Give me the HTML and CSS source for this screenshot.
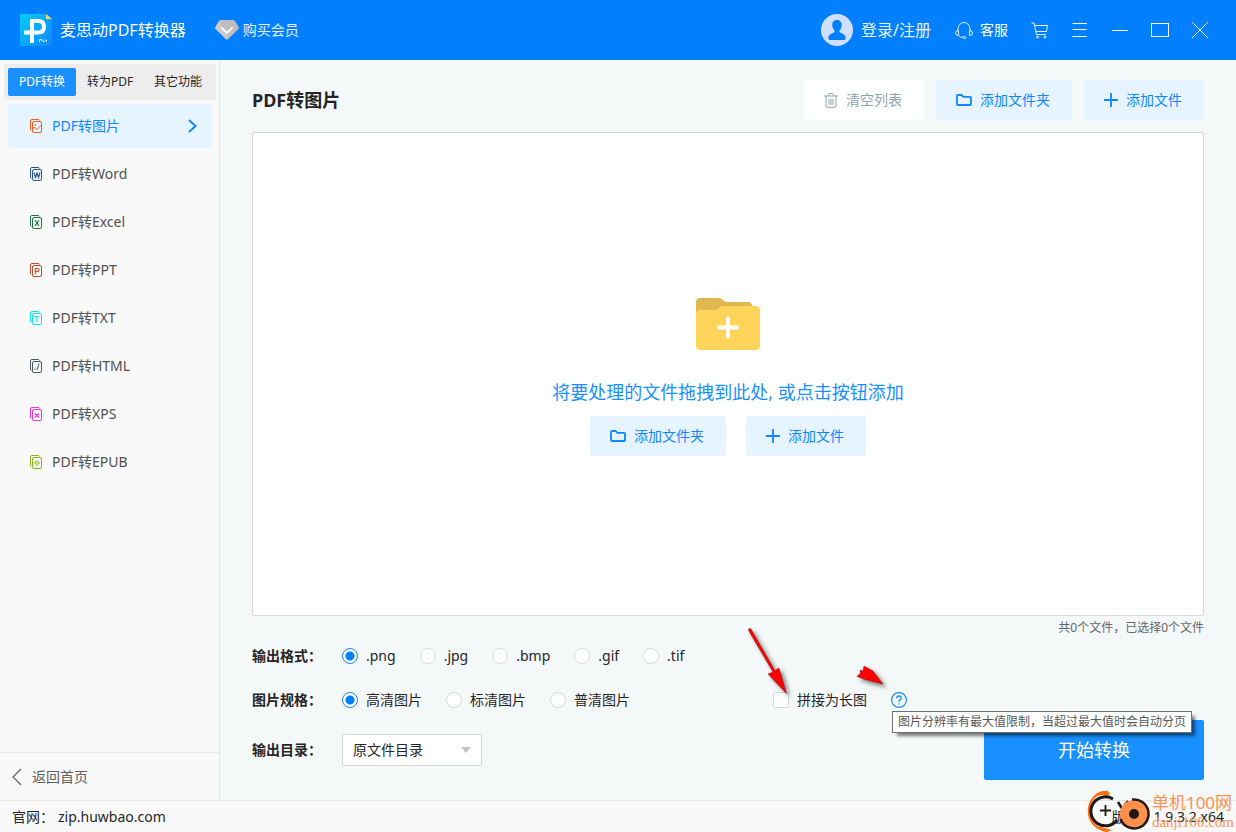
FILE: index.html
```html
<!DOCTYPE html>
<html lang="zh-CN">
<head>
<meta charset="utf-8">
<title>麦思动PDF转换器</title>
<link rel="stylesheet" href="styles.css">
</head>
<body>
<svg class="defs" aria-hidden="true">
  <symbol id="pages" viewBox="0 0 12 14"><path d="M1.5 11.5Q.5 11 .5 10V2Q.5.5 2 .5H8Q9.200 .5 9.500 1.500" fill="none" stroke="currentColor"/><rect x="2.500" y="2.500" width="9" height="11" rx="1.500" fill="none" stroke="currentColor"/></symbol>
  <symbol id="folder" viewBox="0 0 16 12"><path d="M1 2Q1 1 2 1H5.500L7.500 2.800H14Q15 2.800 15 3.800V10Q15 11 14 11H2Q1 11 1 10Z" fill="none" stroke="currentColor" stroke-width="1.800"/></symbol>
  <symbol id="plus" viewBox="0 0 14 14"><path d="M7 0V14M0 7H14" fill="none" stroke="currentColor" stroke-width="1.800"/></symbol>
</svg>
<header class="header">
  <svg class="logo" viewBox="0 0 32 32" aria-hidden="true">
    <defs><linearGradient id="lg" x1="0" y1="0" x2="1" y2="1"><stop offset="0" stop-color="#00cdfb"/><stop offset="1" stop-color="#1285fb"/></linearGradient></defs>
    <path d="M0 0H26L32 5V32H0Z" fill="url(#lg)"/><path d="M26 0L32 5H26Z" fill="#ffd45c"/>
    <path d="M12 29V7H18.500Q24 7 24 12.800T18.500 18.600H4" fill="none" stroke="#fff" stroke-width="4"/>
    <path d="M19.500 28V25.500H21.500V27M23 25.500V27.500H24.500M25.500 26.500H27M26.200 25.500V28" fill="none" stroke="#fff" stroke-width=".8"/>
  </svg>
  <h1 class="app-name">麦思动PDF转换器</h1>
  <button class="vip" type="button">
    <svg width="24" height="20" viewBox="0 0 24 20" aria-hidden="true"><path d="M6 0H18Q19 0 20 1L23.500 6.500Q24.300 8 23.500 9L13 19.300Q12 20 11 19.300L.5 9Q-.3 8 .5 6.500L4 1Q5 0 6 0Z" fill="#bdbdbd"/><path d="M5 0L0 8 12 20V13L6 7Z" fill="#cbcbcb"/><path d="M7 8L12 13 17 8" fill="none" stroke="#fff" stroke-width="1.800" stroke-linecap="round"/></svg>
    购买会员</button>
  <button class="login" type="button">
    <svg width="32" height="32" viewBox="0 0 32 32" aria-hidden="true"><circle cx="16" cy="16" r="16" fill="#d0dfff"/><path d="M16 6C12.500 6 11 8.500 11.300 11.500C11.500 14 12.500 15.500 13.500 16.500V18C12 19.500 7.500 20 7.300 24Q7.300 26 9 26H23Q24.700 26 24.700 24C24.500 20 20 19.500 18.500 18V16.500C19.500 15.500 20.500 14 20.700 11.500C21 8.500 19.500 6 16 6Z" fill="#007fff"/></svg>
    登录/注册</button>
  <button class="service" type="button">
    <svg width="18" height="17" viewBox="0 0 18 17" fill="none" stroke="#e6f2ff" aria-hidden="true"><path d="M3 9V7A6 6.500 0 0 1 15 7V9M3.500 8.500Q.5 8.500 .5 11T3.500 13.500ZM14.500 8.500Q17.500 8.500 17.500 11T14.500 13.500ZM3.500 13.500Q5 15.500 8 15.500"/><ellipse cx="9.500" cy="15.500" rx="1.500" ry="1"/></svg>
    客服</button>
  <nav class="window-tools">
    <button type="button" aria-label="购物车"><svg width="18" height="17" viewBox="0 0 18 17" fill="none" stroke="#e6f2ff"><path d="M.5 1H3L5.500 12.500H15M3.500 3.500H16.500L15.500 9.500H5"/><circle cx="6.500" cy="15" r="1"/><circle cx="14" cy="15" r="1"/></svg></button>
    <button type="button" aria-label="菜单"><svg width="16" height="14" viewBox="0 0 16 14" fill="none" stroke="#fff"><path d="M.5 .5H15M.5 6.500H15M.5 13.500H15"/></svg></button>
    <button type="button" aria-label="最小化"><svg width="16" height="15" viewBox="0 0 16 15" stroke="#fff"><path d="M0 7.500H16"/></svg></button>
    <button type="button" aria-label="最大化"><svg width="18" height="14" viewBox="0 0 18 14" fill="none" stroke="#fff"><rect x=".5" y=".5" width="17" height="13"/></svg></button>
    <button type="button" aria-label="关闭"><svg width="18" height="18" viewBox="0 0 18 18" stroke="#fff"><path d="M1 1L17 17M17 1L1 17"/></svg></button>
  </nav>
</header>
<div class="body">
  <aside class="sidebar">
    <div class="tabs">
      <button class="tab tab-active" type="button">PDF转换</button>
      <button class="tab" type="button">转为PDF</button>
      <button class="tab" type="button">其它功能</button>
    </div>
    <nav class="menu">
      <a class="item item-active" href="#"><svg class="file-icon image" viewBox="0 0 12 14"><use href="#pages"/><path d="M2.500 9.500L5 8.500 7 10.500 11.500 6" fill="none" stroke="currentColor"/><circle cx="5.500" cy="6" r=".8" fill="currentColor"/></svg>PDF转图片<svg class="chevron" viewBox="0 0 9 14"><path d="M1 1L7.500 7 1 13" fill="none" stroke="currentColor" stroke-width="2"/></svg></a>
      <a class="item" href="#"><svg class="file-icon word" viewBox="0 0 12 14"><use href="#pages"/><path d="M4 5.500L5.500 10.500 7 6 8.500 10.500 10 5.500" fill="none" stroke="currentColor" stroke-width="1.200"/></svg>PDF转Word</a>
      <a class="item" href="#"><svg class="file-icon excel" viewBox="0 0 12 14"><use href="#pages"/><path d="M5 5L9 11M9 5L5 11" fill="none" stroke="currentColor" stroke-width="1.200"/></svg>PDF转Excel</a>
      <a class="item" href="#"><svg class="file-icon ppt" viewBox="0 0 12 14"><use href="#pages"/><path d="M5.500 11V5.500H7.500Q9 5.500 9 7T7.500 8.500H5.500" fill="none" stroke="currentColor" stroke-width="1.200"/></svg>PDF转PPT</a>
      <a class="item" href="#"><svg class="file-icon txt" viewBox="0 0 12 14"><use href="#pages"/><path d="M4.500 5.500H9.500M7 5.500V11" fill="none" stroke="currentColor" stroke-width="1.200"/></svg>PDF转TXT</a>
      <a class="item" href="#"><svg class="file-icon html" viewBox="0 0 12 14"><use href="#pages"/><path d="M5 9.500V11M9 4.500L7 11" fill="none" stroke="currentColor"/></svg>PDF转HTML</a>
      <a class="item" href="#"><svg class="file-icon xps" viewBox="0 0 12 14"><use href="#pages"/><path d="M5 6.500L9 10.500M9 6.500L5 10.500" fill="none" stroke="currentColor" stroke-width="1.200"/></svg>PDF转XPS</a>
      <a class="item" href="#"><svg class="file-icon epub" viewBox="0 0 12 14"><use href="#pages"/><path d="M7 5.500L9.500 8 7 10.500 4.500 8ZM5.500 8H8.500" fill="none" stroke="currentColor"/></svg>PDF转EPUB</a>
    </nav>
    <a class="back" href="#"><svg width="10" height="18" viewBox="0 0 10 18" fill="none" stroke="currentColor" stroke-width="1.200"><path d="M9 1L1 9 9 17"/></svg>返回首页</a>
  </aside>
  <main class="main">
    <div class="toolbar">
      <h2 class="title">PDF转图片</h2>
      <button class="btn btn-clear" type="button"><svg width="14" height="15" viewBox="0 0 14 15" fill="none" stroke="currentColor"><path d="M0 3H14M4.500 3V1.500Q4.500 .5 5.500 .5H8.500Q9.500 .5 9.500 1.500V3M2 3V13Q2 14.300 3.200 14.300H10.800Q12 14.300 12 13V3M5 5.500V12M7 5.500V12M9 5.500V12"/></svg>清空列表</button>
      <button class="btn" type="button"><svg width="16" height="12"><use href="#folder"/></svg>添加文件夹</button>
      <button class="btn" type="button"><svg width="14" height="14"><use href="#plus"/></svg>添加文件</button>
    </div>
    <section class="drop">
      <svg class="big-folder" viewBox="0 0 64 52" aria-hidden="true"><path d="M0 20V4Q0 0 4 0H22Q25 0 27 2L29.500 4H52Q56 4 56 8V20Z" fill="#dfb84f"/><path d="M0 16Q0 12 4 12H18Q21 12 23 10L24 9Q25.500 8 28 8H60Q64 8 64 12V48Q64 52 60 52H4Q0 52 0 48Z" fill="#ffd45b"/><path d="M32 20.500V38.500M23 29.500H41" stroke="#fff" stroke-width="4" stroke-linecap="round"/></svg>
      <p class="hint">将要处理的文件拖拽到此处, 或点击按钮添加</p>
      <div class="drop-actions">
        <button class="btn" type="button"><svg width="16" height="12"><use href="#folder"/></svg>添加文件夹</button>
        <button class="btn" type="button"><svg width="14" height="14"><use href="#plus"/></svg>添加文件</button>
      </div>
    </section>
    <p class="count">共0个文件，已选择0个文件</p>
    <div class="row" role="radiogroup" aria-labelledby="fmt">
      <span class="row-label" id="fmt">输出格式：</span>
      <label class="choice"><input type="radio" name="fmt" checked>.png</label>
      <label class="choice"><input type="radio" name="fmt">.jpg</label>
      <label class="choice"><input type="radio" name="fmt">.bmp</label>
      <label class="choice"><input type="radio" name="fmt">.gif</label>
      <label class="choice"><input type="radio" name="fmt">.tif</label>
    </div>
    <div class="row row-spec" role="radiogroup" aria-labelledby="spec">
      <span class="row-label" id="spec">图片规格：</span>
      <label class="choice"><input type="radio" name="spec" checked>高清图片</label>
      <label class="choice"><input type="radio" name="spec">标清图片</label>
      <label class="choice"><input type="radio" name="spec">普清图片</label>
      <div class="merge">
        <label class="choice"><input type="checkbox">拼接为长图</label>
        <span class="help"><svg width="16" height="16" viewBox="0 0 16 16" fill="none" stroke="#1890ff"><circle cx="8" cy="8" r="7.400" stroke-width="1.200"/><path d="M5.800 6.200Q5.800 4 8 4T10.200 6Q10.200 7 9 7.800T8 10M8 11.200V12.600" stroke-width="1.300"/></svg>
          <span class="tooltip" role="tooltip">图片分辨率有最大值限制，当超过最大值时会自动分页</span></span>
        <svg class="arrows" viewBox="0 0 150 80" aria-hidden="true"><g fill="#f00" stroke="#8c1010" stroke-width=".5"><path d="M8.300 10Q9 7.500 11 9L35 50.500 39 48 46.500 73.500 28 54 33 52Z"/><path d="M117 56.500L120.500 53 120 50 123 51 124 46 133 51 143 64 127 60Z"/></g></svg>
      </div>
    </div>
    <div class="submit-row">
      <label class="row-label" for="dir">输出目录：</label>
      <span class="select-wrap"><select id="dir" class="select"><option>原文件目录</option></select></span>
      <button class="start" type="button">开始转换</button>
    </div>
  </main>
</div>
<footer class="footer">
  <span>官网：</span><a class="site" href="#">zip.huwbao.com</a>
  <span class="version"><span class="ver-label">版本：</span>1.9.3.2.x64</span>
  <div class="watermark">
    <svg width="64" height="42" viewBox="0 0 64 42" fill="none" aria-hidden="true"><path d="M21 2C10 1 2 10 2 21S9 39 21 41" stroke="#ff6f0f" stroke-width="2.500"/><path d="M9 6Q17 -1 23 3L21 6Q15 4 9 6ZM9 36Q18 38 25 40Q20 43 14 40Z" fill="#ff6f0f"/><path d="M26 9A14.500 14.500 0 1 0 30 30" stroke="#231815" stroke-width="3"/><path d="M18.500 15V26M13 20.500H24" stroke="#231815" stroke-width="1.800"/><path d="M31 12L36 20M41 11L37 16" stroke="#231815" stroke-width="2.500"/><circle cx="47" cy="24" r="14" fill="#ff914d"/><path d="M45 9.600A14.500 14.500 0 1 1 33.500 29" stroke="#231815" stroke-width="2.500"/><circle cx="47" cy="24" r="5" fill="#231815"/></svg>
    <div class="mark-text"><span class="mark-name">单机100网</span><span class="mark-url">danji100.com</span></div>
  </div>
</footer>
</body>
</html>
```
FILE: styles.css
```css
* { box-sizing: border-box; }
body {
  margin: 0;
  min-height: 100vh;
  display: flex;
  flex-direction: column;
  font: 14px/20px "Noto Sans", "Noto Sans CJK SC", sans-serif;
  color: #262626;
  background: #f4f8f9;
}
button { font: inherit; color: inherit; border: 0; padding: 0; background: none; white-space: nowrap; }
a { color: inherit; text-decoration: none; }
h1, h2, p { margin: 0; }
svg { flex: none; }
.defs { position: absolute; width: 0; height: 0; }

.header { height: 60px; display: flex; align-items: center; padding: 0 16px 0 20px; background: #007fff; color: #fff; }
.logo { width: 32px; height: 32px; margin-right: 8px; }
.app-name { font-size: 16px; font-weight: 400; line-height: 24px; }
.vip { display: flex; align-items: center; gap: 4px; margin-left: 29px; color: #e6f2ff; }
.login { display: flex; align-items: center; gap: 8px; margin-left: auto; font-size: 16px; color: #e6f2ff; }
.service { display: flex; align-items: center; gap: 7px; margin: 0 12px 0 24px; }
.window-tools { display: flex; }
.window-tools button { width: 40px; height: 40px; display: flex; align-items: center; justify-content: center; }

.body { flex: 1; display: flex; }
.sidebar { width: 220px; flex: none; display: flex; flex-direction: column; background: #f9f9f9; border-right: 1px solid #e4e6e8; }
.tabs { display: flex; margin: 4px 3px 4px 4px; padding: 4px; background: #ededed; border-radius: 2px; }
.tab { flex: 1; height: 28px; font-size: 12px; border-radius: 2px; }
.tab-active { background: #1890ff; color: #fff; }
.menu { display: flex; flex-direction: column; gap: 4px; padding: 0 7px 0 8px; }
.item { height: 44px; display: flex; align-items: center; padding: 0 15px 0 22px; border-radius: 3px; line-height: 22px; color: #505050; }
.item-active { background: #e6f4ff; color: #1684fc; }
.file-icon { width: 12px; height: 14px; margin-right: 10px; }
.chevron { width: 9px; height: 14px; margin-left: auto; }
.image { color: #ff5722; }
.word { color: #2b579a; }
.excel { color: #217346; }
.ppt { color: #d24726; }
.txt { color: #13e3f9; }
.html { color: #455a64; }
.xps { color: #f52fd0; }
.epub { color: #85b716; }
.back { height: 48px; display: flex; align-items: center; gap: 10px; margin-top: auto; padding-left: 12px; border-top: 1px solid #e4e6e8; color: #606060; }

.main { flex: 1; display: flex; flex-direction: column; padding: 20px 32px; }
.toolbar { display: flex; align-items: center; gap: 12px; margin-bottom: 12px; }
.title { margin-right: auto; font-size: 18px; font-weight: 700; line-height: 24px; }
.btn { height: 40px; display: flex; align-items: center; gap: 8px; padding: 0 22px 0 20px; border-radius: 2px; background: #e6f4ff; color: #0f86ff; }
.btn-clear { background: #fff; color: #90a4ae; }
.drop { flex: 1; display: flex; flex-direction: column; align-items: center; justify-content: center; background: #fff; border: 1px solid #d9d9d9; border-radius: 2px; }
.big-folder { width: 64px; height: 52px; margin: 5px 0 30px; }
.hint { font-size: 18px; line-height: 24px; margin-bottom: 12px; color: #1890ff; }
.drop-actions { display: flex; gap: 20px; }
.count { height: 24px; line-height: 24px; font-size: 12px; text-align: right; color: #666; }

.row { height: 32px; display: flex; align-items: center; gap: 24px; }
.row-spec { margin: 12px 0 4px; }
.row-label { width: 90px; flex: none; font-weight: 700; }
.row > .row-label { margin-right: -24px; }
.choice { display: flex; align-items: center; gap: 8px; white-space: nowrap; }
.choice input { appearance: none; width: 16px; height: 16px; margin: 0; border: 1px solid #d9d9d9; background: #fff; border-radius: 2px; }
.choice input[type="radio"] { border-radius: 50%; }
.choice input[type="radio"]:checked { border-color: #1684ff; background: radial-gradient(circle, #007fff 4px, #fff 5px); }
.merge { position: relative; display: flex; align-items: center; gap: 24px; margin: 0 297px 0 auto; }
.help { position: relative; display: flex; }
.tooltip { position: absolute; z-index: 2; left: 1px; top: 19px; padding: 0 5px; border: 1px solid #707070; background: #fff; box-shadow: 4px 4px 3px -1px rgba(0, 0, 0, .5); font-size: 12px; line-height: 20px; white-space: nowrap; color: #575757; }
.arrows { position: absolute; right: 17px; bottom: 10px; width: 150px; height: 80px; filter: drop-shadow(3px 3px 2px rgba(0, 0, 0, .5)); pointer-events: none; }
.submit-row { display: flex; align-items: center; }
.select-wrap { position: relative; }
.select-wrap::after { content: ""; position: absolute; right: 11px; top: 13px; border: 5px solid transparent; border-top: 6px solid #c4c4c4; border-bottom: 0; pointer-events: none; }
.select { appearance: none; display: block; width: 140px; height: 32px; padding: 0 10px; border: 1px solid #d9d9d9; border-radius: 2px; background: #fff; font: inherit; color: inherit; }
.start { width: 220px; height: 60px; margin-left: auto; border-radius: 2px; background: #1890ff; color: #fff; font-size: 18px; }

.footer { position: relative; height: 32px; display: flex; align-items: center; padding: 0 12px; background: #f9f9f9; border-top: 1px solid #e4e6e8; }
.site { margin-left: 4px; }
.version { display: flex; margin-left: auto; }
.ver-label { width: 42px; }
.watermark { position: absolute; right: 2px; bottom: 0; display: flex; align-items: center; gap: 1px; }
.mark-text { display: flex; flex-direction: column; color: #ff914d; }
.mark-name { font-size: 17px; line-height: 22px; }
.mark-url { font: 15px/16px "Liberation Serif", serif; }
```
